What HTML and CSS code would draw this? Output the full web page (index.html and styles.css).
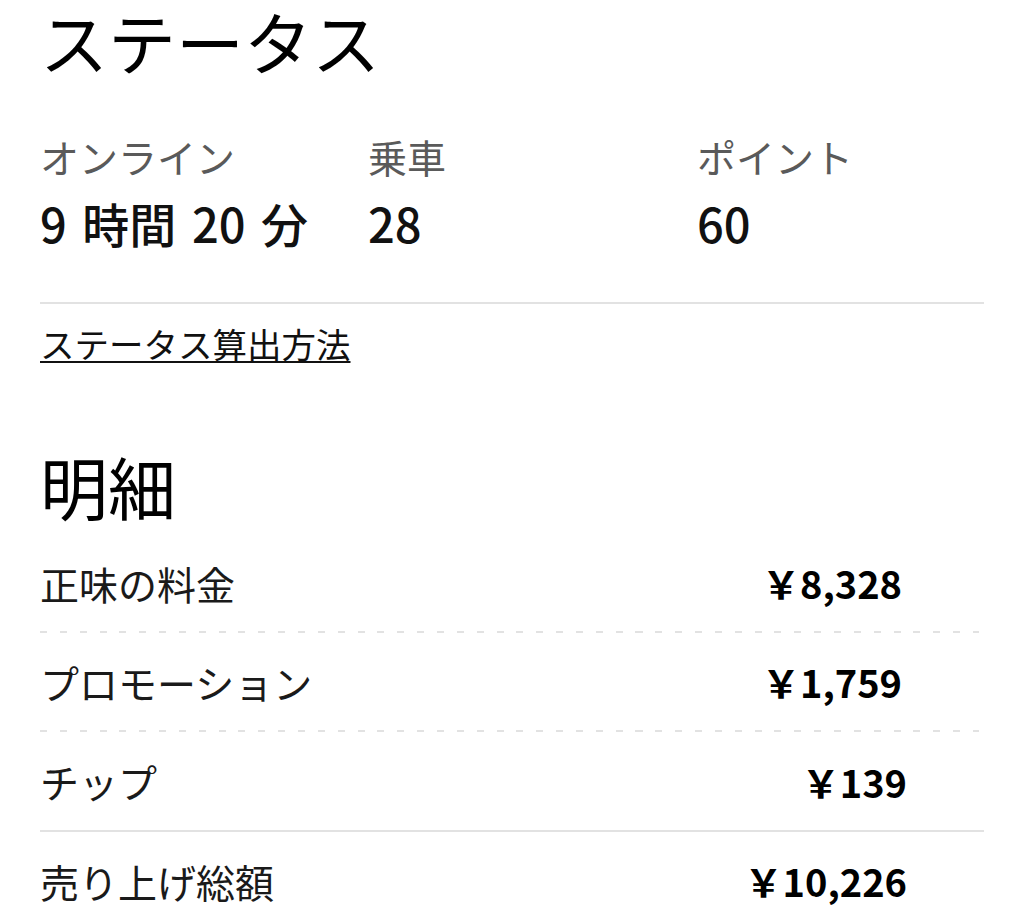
FILE: index.html
```html
<!DOCTYPE html>
<html lang="ja">
<head>
  <meta charset="UTF-8">
  <title>ステータス</title>
  <meta name="viewport" content="width=device-width, initial-scale=1.0">
  <link rel="stylesheet" href="styles.css">
</head>
<body>
  <section class="status-section">
    <h1 class="section-title">ステータス</h1>

    <div class="stats">
      <div class="stat">
        <div class="stat-label">オンライン</div>
        <div class="stat-value">9 時間 20 分</div>
      </div>
      <div class="stat">
        <div class="stat-label">乗車</div>
        <div class="stat-value">28</div>
      </div>
      <div class="stat">
        <div class="stat-label">ポイント</div>
        <div class="stat-value">60</div>
      </div>
    </div>

    <a class="help-link" href="#">ステータス算出方法</a>
  </section>

  <section class="breakdown">
    <h2 class="section-title">明細</h2>

    <div class="rows">
      <div class="row dashed">
        <span class="row-label">正味の料金</span>
        <span class="row-amount">￥8,328</span>
      </div>
      <div class="row dashed">
        <span class="row-label">プロモーション</span>
        <span class="row-amount">￥1,759</span>
      </div>
      <div class="row solid">
        <span class="row-label">チップ</span>
        <span class="row-amount">￥139</span>
      </div>
      <div class="row">
        <span class="row-label">売り上げ総額</span>
        <span class="row-amount">￥10,226</span>
      </div>
    </div>
  </section>
</body>
</html>
```

FILE: styles.css
```css
:root {
  --text: #111;
  --muted: #5a5a5a;
  --line: #e2e2e2;
}

body {
  margin: 0;
  padding: 0 40px;
  background: #fff;
  color: var(--text);
  font-family: "Noto Sans CJK JP", "Noto Sans", sans-serif;
}

.section-title {
  margin: 0;
  font-size: 68px;
  font-weight: 400;
  line-height: 81px;
  color: #000;
}

.stats {
  display: grid;
  grid-template-columns: 328px 329px 1fr;
  margin-top: 50px;
  padding-bottom: 49px;
  border-bottom: 2px solid var(--line);
}

.stat-label {
  font-size: 39px;
  line-height: 50px;
  color: var(--muted);
}

.stat-value {
  margin-top: 12px;
  font-size: 47px;
  font-weight: 500;
  line-height: 60px;
  word-spacing: 5px;
}

.help-link {
  display: inline-block;
  margin-top: 17px;
  font-size: 34.5px;
  line-height: 44px;
  color: var(--text);
  text-decoration: underline;
  text-underline-offset: 3px;
  text-decoration-thickness: 2px;
}

.breakdown {
  margin-top: 80px;
}

.rows {
  margin-top: 8px;
}

.row {
  display: flex;
  justify-content: space-between;
  align-items: center;
  height: 97px;
  padding-right: 77px;
  border-bottom: 2px solid transparent;
}

.row.dashed {
  margin-right: 5px;
  border-bottom: none;
  padding-bottom: 2px;
  background: repeating-linear-gradient(to right, var(--line) 0 7px, transparent 7px 19.85px) bottom / 100% 2px no-repeat;
}

.row.solid {
  height: 98px;
  border-bottom-color: var(--line);
}

.row-label {
  font-size: 39px;
  color: #1a1a1a;
}

.row-amount {
  font-size: 38px;
  font-weight: 700;
  color: #000;
}
```
